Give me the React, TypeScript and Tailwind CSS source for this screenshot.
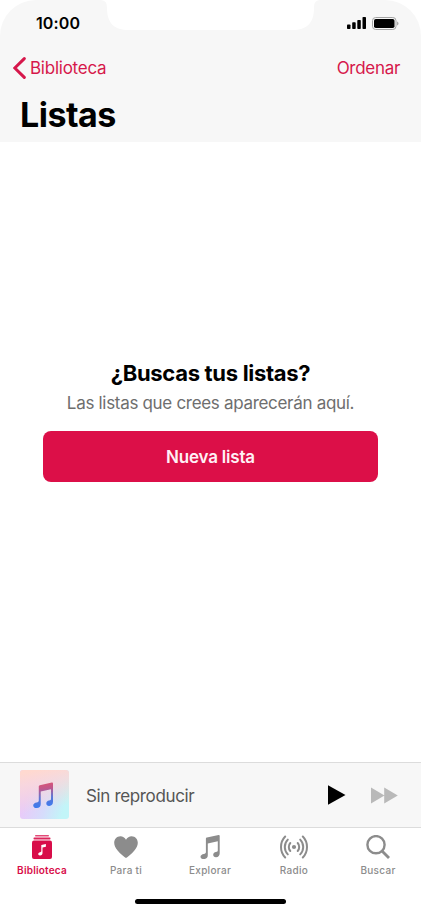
import React from 'react';
import clsx from 'clsx';

interface IconProps {
  className?: string;
}

interface Tab {
  label: string;
  icon: React.FC<IconProps>;
  labelClass: string;
}

// beamed note on a 20x24 grid, shared by the tab icon and the album cover
const NOTE_PATH =
  'M6.900 2.500 18.600.1Q19.700-.1 19.700 1v17.200c0 2.400-1.300 3.800-3.600 4-1.800.1-2.900-.9-2.900-2.400 0-1.600 1.100-2.500 2.700-2.800 1.400-.3 1.900-.6 1.900-1.700V6.300L7.800 8.400v11.800c0 2.400-1.400 3.700-3.800 3.900-1.800.1-3.500-.8-3.500-2.400 0-1.600 1.600-2.500 3.300-2.800 1.500-.3 2.100-.7 2.100-1.900V3.600q0-.9 1-1.100z';

const LibraryIcon: React.FC<IconProps> = ({ className }) => (
  <svg viewBox="0 0 20 24" className={clsx('w-5 h-6', className)}>
    <rect x="3" y="0" width="14" height="1.500" rx=".7" fill="currentColor" opacity=".75" />
    <rect x="1.500" y="2.600" width="17" height="1.900" rx=".8" fill="currentColor" opacity=".9" />
    <rect x="0" y="5.500" width="20" height="18.500" rx="2" fill="currentColor" />
    <path
      d="M9.300 9.900 13.900 9v2.700l-3.400.7v5.500c0 1.500-.8 2.400-2.400 2.600-1.200.1-1.900-.5-1.900-1.400 0-1 .7-1.500 1.900-1.800.8-.2 1.200-.4 1.200-1.200z"
      fill="#fff"
    />
  </svg>
);

const HeartIcon: React.FC<IconProps> = ({ className }) => (
  <svg viewBox="0 0 24 22" className={clsx('w-6 h-[22px]', className)}>
    <path
      d="M12 22C10.400 20.900 6.600 18 3.800 14.700 1.500 12 .2 9.500.2 6.800.2 3 2.900.2 6.400.2c2.300 0 4.400 1.300 5.600 3.600C13.200 1.500 15.300.2 17.600.2c3.500 0 6.200 2.800 6.200 6.600 0 2.700-1.300 5.200-3.600 7.900C17.400 18 13.600 20.900 12 22z"
      fill="currentColor"
    />
  </svg>
);

const NoteIcon: React.FC<IconProps> = ({ className }) => (
  <svg viewBox="0 0 20 24" className={clsx('w-5 h-6', className)}>
    <path d={NOTE_PATH} fill="currentColor" />
  </svg>
);

const RadioIcon: React.FC<IconProps> = ({ className }) => (
  <svg viewBox="0 0 28 24" className={clsx('w-7 h-6', className)}>
    <circle cx="14" cy="12" r="2.100" fill="currentColor" />
    <g fill="none" stroke="currentColor" strokeWidth="2" strokeLinecap="round">
      <path d="M10.300 8c-2 2.200-2 5.800 0 8M17.700 8c2 2.200 2 5.800 0 8" />
      <path d="M7.800 4.600c-4 4-4 10.800 0 14.800M20.200 4.600c4 4 4 10.800 0 14.800" />
      <path d="M5.200 1.500c-5.600 5.700-5.600 15.300 0 21M22.800 1.500c5.600 5.700 5.600 15.300 0 21" />
    </g>
  </svg>
);

const SearchIcon: React.FC<IconProps> = ({ className }) => (
  <svg viewBox="0 0 24 24" className={clsx('w-6 h-6', className)}>
    <circle cx="10" cy="9.700" r="8.600" fill="none" stroke="currentColor" strokeWidth="2.400" />
    <path d="m16 16 7 7" stroke="currentColor" strokeWidth="2.800" />
  </svg>
);

const tabs: Tab[] = [
  { label: 'Biblioteca', icon: LibraryIcon, labelClass: 'tracking-[0.2px]' },
  { label: 'Para ti', icon: HeartIcon, labelClass: 'tracking-[0.3px]' },
  { label: 'Explorar', icon: NoteIcon, labelClass: 'tracking-[0.3px]' },
  { label: 'Radio', icon: RadioIcon, labelClass: 'tracking-[0.3px]' },
  { label: 'Buscar', icon: SearchIcon, labelClass: 'tracking-[0.3px]' },
];

const StatusBar = () => (
  <div className="relative flex h-[46px] items-center justify-between pl-9 pr-[22px]">
    <svg viewBox="0 0 222 30" className="absolute left-[99px] top-0 h-[30px] w-[222px]">
      <path d="M0 0c6 0 8 2 8 8 0 15 7 22 22 22h163c15 0 22-7 22-22 0-6 2-8 7-8z" fill="#fff" />
    </svg>
    <span className="text-[16px] font-semibold leading-none tracking-[0.1px]">10:00</span>
    <div className="flex items-center gap-[6px]">
      <svg viewBox="0 0 19 12" className="h-3 w-[19px]">
        <rect x="0" y="7.500" width="3.500" height="4.500" rx=".8" />
        <rect x="5.200" y="5.300" width="3.500" height="6.700" rx=".8" />
        <rect x="10.300" y="3" width="3.500" height="9" rx=".8" />
        <rect x="15.500" y="0" width="3.500" height="12" rx=".8" />
      </svg>
      <svg viewBox="0 0 27 13" className="h-[13px] w-[27px]">
        <rect x=".5" y=".5" width="23.500" height="12" rx="3.200" fill="none" stroke="#a3a3a3" />
        <rect x="2" y="2" width="20.500" height="9" rx="1.800" />
        <path d="M25.200 4.500c1.700.7 1.700 3.300 0 4z" fill="#999" />
      </svg>
    </div>
  </div>
);

const Header = () => (
  <header className="h-[142px] rounded-t-[36px] bg-[#f7f7f7]">
    <StatusBar />
    <nav className="flex h-[43px] items-center justify-between pl-[13px] pr-[21px] text-[17px] text-[#d6174b]">
      <button className="flex items-center gap-1">
        <svg viewBox="0 0 13 22" className="h-[22px] w-[13px]">
          <path d="M11.300 1.600 1.800 11l9.500 9.400" fill="none" stroke="currentColor" strokeWidth="3" strokeLinecap="round" />
        </svg>
        <span className="pt-0.5 tracking-[-0.25px]">Biblioteca</span>
      </button>
      <button className="pt-0.5 tracking-[-0.3px]">Ordenar</button>
    </nav>
    <h1 className="pl-5 pt-[5px] text-[34px] font-bold leading-[42px] tracking-[-0.5px]">Listas</h1>
  </header>
);

const EmptyState = () => (
  <main className="flex flex-1 flex-col items-center px-[43px] pt-[217px]">
    <h2 className="text-[22px] font-bold leading-7 tracking-[-0.3px]">¿Buscas tus listas?</h2>
    <p className="mt-1 whitespace-nowrap text-[17px] leading-6 tracking-[-0.31px] text-[#6e6e6e]">
      Las listas que crees aparecerán aquí.
    </p>
    <button className="mt-4 h-[51px] w-full rounded-lg bg-[#dc0f48] pt-0.5 text-[17px] font-semibold tracking-[-0.2px] text-[#fff0f5]">
      Nueva lista
    </button>
  </main>
);

const MiniPlayer = () => (
  <section className="flex h-[66px] items-center border-y border-[#dcdcdc] bg-[#f7f7f7] pl-5 pr-[23px]">
    <svg viewBox="0 0 49 49" className="-mt-px h-[49px] w-[49px] rounded-[3px]">
      <defs>
        <linearGradient id="cover" x1=".1" y1=".65" x2="1" y2=".95">
          <stop offset="0" stopColor="#e8cbf9" />
          <stop offset=".45" stopColor="#d6dcfb" />
          <stop offset=".85" stopColor="#c2f5f8" />
        </linearGradient>
        <linearGradient id="coverTop" x1=".4" y1="0" x2=".55" y2=".8">
          <stop offset="0" stopColor="#ffd9d0" />
          <stop offset=".3" stopColor="#fcd9d8" stopOpacity=".8" />
          <stop offset="1" stopColor="#ffd9d0" stopOpacity="0" />
        </linearGradient>
        <linearGradient id="note" x1=".4" y1="0" x2=".5" y2="1">
          <stop offset="0" stopColor="#dc5573" />
          <stop offset=".25" stopColor="#c0568c" />
          <stop offset=".6" stopColor="#5c77d4" />
          <stop offset="1" stopColor="#397bf2" />
        </linearGradient>
      </defs>
      <rect width="49" height="49" fill="url(#cover)" />
      <rect width="49" height="49" fill="url(#coverTop)" />
      <path d={NOTE_PATH} transform="translate(12.700 12.500) scale(1.030 1.060)" fill="url(#note)" />
    </svg>
    <span className="ml-[17px] flex-1 pt-[3px] text-[17px] tracking-[-0.35px] text-[#555]">Sin reproducir</span>
    <svg viewBox="0 0 18 20" className="h-5 w-[18px]">
      <path d="M0 .2 17.500 10 0 19.800z" />
    </svg>
    <svg viewBox="0 0 27 17" className="ml-[25px] h-[17px] w-[27px]">
      <path d="M0 .5 13.500 8.500 0 16.500zM13.200.5 26.800 8.500 13.200 16.500z" fill="#b9b9b9" />
    </svg>
  </section>
);

const TabBar = () => (
  <footer className="flex h-[84px] flex-col items-center justify-between pb-2">
    <nav className="grid w-full grid-cols-5 pr-px pt-[7px]">
      {tabs.map((tab, i) => (
        <button
          key={tab.label}
          className={clsx('flex flex-col items-center', i === 0 ? 'text-[#d80d49]' : 'text-[#8c8c8c]')}
        >
          <span className="flex h-6 items-center">
            <tab.icon />
          </span>
          <span
            className={clsx(
              'mt-1 text-[10px] leading-[14px]',
              i === 0 ? 'font-semibold' : 'font-medium',
              tab.labelClass
            )}
          >
            {tab.label}
          </span>
        </button>
      ))}
    </nav>
    <div className="h-[5px] w-[151px] rounded-full bg-black" />
  </footer>
);

const App: React.FC = () => (
  <div className="flex h-[912px] w-[421px] flex-col overflow-hidden bg-white font-['Inter','Liberation_Sans',sans-serif] text-black">
    <Header />
    <EmptyState />
    <MiniPlayer />
    <TabBar />
  </div>
);

export default App;
